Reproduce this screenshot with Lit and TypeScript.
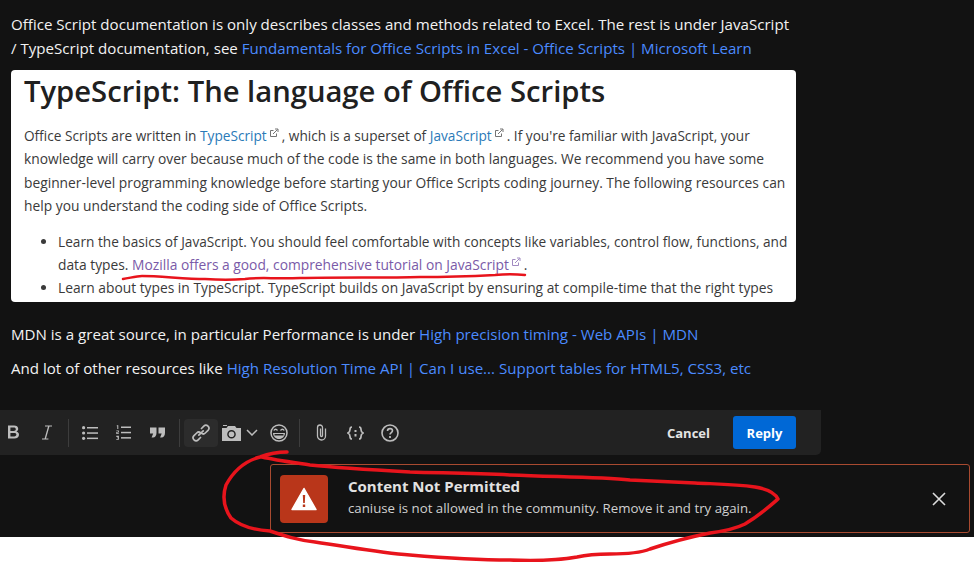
import { LitElement, html, css } from "lit";
import { customElement } from "lit/decorators.js";

const extIcon = html`<svg class="ext" viewBox="0 0 10 10" width="10" height="10" fill="none" stroke="currentColor" stroke-width="1">
  <path d="M7.5 5.500v3h-6v-6h3" />
  <path d="M4 6l4.500-4.500M6 1h3v3" />
</svg>`;

const circlePath =
  "M287 452 C277 452 268 454 260 457 C245 461 233 472 226 485 C222 497 224 508 231 518 C240 526 254 530 270 531 C285 536 297 540 315 542 C350 547 380 553 410 555 C445 558 480 560 510 560 C535 561 560 560 577 557 C590 554 600 554 610 554 C625 554 640 553 650 549 C665 544 690 537 710 533 C725 531 735 529 745 524 C760 515 770 506 778 499 C775 493 768 489 755 487 C735 484 715 484 695 483 C675 482 650 481 630 480 C600 477 560 477 510 475 C470 473 440 473 410 472 C375 470 340 468 310 465 C290 462 275 460 262 457";

const underlinePath =
  "M123 279 C130 278 136 276 142 276 C160 276 185 279 205 279 C220 280 232 280 245 279 C258 277 275 279 300 278 C340 277 385 278 420 277 C450 277 475 276 495 275 C505 274 515 274 525 275";

@customElement("app-root")
export class AppRoot extends LitElement {
  static styles = css`
    :host {
      display: block;
      position: relative;
      width: 974px;
      height: 562px;
      background: #fff;
      overflow: hidden;
      font-family: "Open Sans", "Noto Sans", sans-serif;
    }
    .page {
      display: flex;
      flex-direction: column;
      height: 537px;
      background: #121212;
    }
    .composer {
      width: 821px;
      flex: none;
    }
    .post {
      height: 410px;
      padding: 12px 0 0 11px;
      box-sizing: border-box;
      color: #f2f2f2;
      font-size: 15.1px;
      line-height: 24px;
    }
    .post p {
      margin: 0;
      white-space: nowrap;
    }
    .post a {
      color: #4b8bff;
    }
    .shot {
      width: 785px;
      height: 232px;
      margin: 10px 0 20px;
      padding: 5px 0 0 13px;
      box-sizing: border-box;
      background: #fff;
      border-radius: 4px;
      overflow: hidden;
      color: #3a3a3a;
      font-size: 13.8px;
      line-height: 23.4px;
    }
    .shot h1 {
      margin: 0 0 17px;
      font-size: 29.2px;
      line-height: 32px;
      font-weight: 600;
      color: #202020;
      white-space: nowrap;
    }
    .shot .para {
      margin: 0 0 12px;
    }
    .shot a {
      color: #2a7ab8;
    }
    .shot a.seen {
      color: #7a5aa8;
    }
    .shot .tight {
      font-size: 13.66px;
    }
    .shot ul {
      margin: 0;
      padding: 0 0 0 34px;
      list-style: disc;
      white-space: nowrap;
    }
    .ext {
      margin: 0 3px 0 2px;
      vertical-align: 3px;
      opacity: 0.7;
    }
    .post p.next {
      margin-top: 10px;
    }
    .toolbar {
      display: flex;
      align-items: center;
      height: 45px;
      background: #222;
      border-radius: 0 0 5px 0;
      box-sizing: border-box;
    }
    .tools {
      display: flex;
      align-items: center;
      height: 100%;
    }
    .tool {
      display: flex;
      align-items: center;
      justify-content: center;
      flex: none;
      height: 28px;
      border-radius: 4px;
    }
    .tool.active {
      background: #2c2c2c;
      margin-left: 4px;
    }
    .tool svg {
      display: block;
    }
    .sep {
      flex: none;
      width: 1px;
      height: 28px;
      background: #3d3d3d;
    }
    .sep.tail {
      margin-left: 1px;
    }
    .actions {
      margin-left: auto;
      display: flex;
      align-items: center;
      gap: 22px;
      padding-right: 25px;
    }
    .cancel {
      font-size: 13px;
      font-weight: 700;
      color: #e4e4e4;
      margin-left: -1px;
      margin-right: 1px;
    }
    .reply {
      width: 63px;
      height: 33px;
      display: flex;
      align-items: center;
      justify-content: center;
      background: #0068d6;
      color: #fff;
      font-size: 13px;
      font-weight: 700;
      border-radius: 3px;
    }
    .toast-row {
      display: flex;
      justify-content: flex-end;
      padding: 9px 4px 0 0;
    }
    .toast {
      width: 700px;
      height: 69px;
      box-sizing: border-box;
      display: flex;
      align-items: center;
      padding: 0 23px 0 9px;
      border: 1px solid #a84a30;
      border-radius: 3px;
      background: #121212;
    }
    .badge {
      flex: none;
      width: 48px;
      height: 48px;
      display: flex;
      align-items: center;
      justify-content: center;
      background: #b9361a;
      border-radius: 4px;
    }
    .msg {
      flex: 1;
      margin-left: 20px;
      padding-bottom: 2px;
      white-space: nowrap;
    }
    .msg b {
      display: block;
      font-size: 15px;
      line-height: 21px;
      font-weight: 700;
      color: #e2e2e2;
    }
    .msg span {
      display: block;
      font-size: 13.25px;
      line-height: 22px;
      color: #d0d0d0;
    }
    .close {
      display: block;
      flex: none;
    }
    .ink {
      position: absolute;
      left: 0;
      top: 0;
      pointer-events: none;
    }
    .ink path {
      fill: none;
      stroke: #e8141c;
      stroke-linecap: round;
      stroke-linejoin: round;
    }
  `;

  render() {
    return html`
      <div class="page">
        <div class="composer">
          <div class="post">
            <p>Office Script documentation is only describes classes and methods related to Excel. The rest is under JavaScript</p>
            <p>/ TypeScript documentation, see <a>Fundamentals for Office Scripts in Excel - Office Scripts | Microsoft Learn</a></p>
            <div class="shot">
              <h1>TypeScript: The language of Office Scripts</h1>
              <div class="para">
                <p class="tight">Office Scripts are written in <a>TypeScript</a>${extIcon}, which is a superset of <a>JavaScript</a>${extIcon}. If you're familiar with JavaScript, your</p>
                <p>knowledge will carry over because much of the code is the same in both languages. We recommend you have some</p>
                <p>beginner-level programming knowledge before starting your Office Scripts coding journey. The following resources can</p>
                <p>help you understand the coding side of Office Scripts.</p>
              </div>
              <ul>
                <li><span class="tight">Learn the basics of JavaScript. You should feel comfortable with concepts like variables, control flow, functions, and</span><br />data types. <a class="seen">Mozilla offers a good, comprehensive tutorial on JavaScript${extIcon}</a>.</li>
                <li>Learn about types in TypeScript. TypeScript builds on JavaScript by ensuring at compile-time that the right types</li>
              </ul>
            </div>
            <p>MDN is a great source, in particular Performance is under <a>High precision timing - Web APIs | MDN</a></p>
            <p class="next">And lot of other resources like <a>High Resolution Time API | Can I use... Support tables for HTML5, CSS3, etc</a></p>
          </div>
          <div class="toolbar">
            <div class="tools">${this.renderTools()}</div>
            <div class="actions">
              <span class="cancel">Cancel</span>
              <span class="reply">Reply</span>
            </div>
          </div>
        </div>
        <div class="toast-row">
          <div class="toast">
            <div class="badge">
              <svg width="26" height="24" viewBox="0 0 26 24">
                <path d="M13 1.500 25 22.500H1Z" fill="#fff" stroke="#fff" stroke-width="1.500" stroke-linejoin="round" />
                <path d="M11.800 8h2.400l-.4 8h-1.600zM11.800 17.600h2.400v2.400h-2.400z" fill="#b9361a" />
              </svg>
            </div>
            <div class="msg">
              <b>Content Not Permitted</b>
              <span>caniuse is not allowed in the community. Remove it and try again.</span>
            </div>
            <svg class="close" width="14" height="14" viewBox="0 0 14 14" stroke="#dcdcdc" stroke-width="1.600" fill="none">
              <path d="M1 1l12 12M13 1 1 13" />
            </svg>
          </div>
        </div>
      </div>
      <svg class="ink" width="974" height="562" viewBox="0 0 974 562">
        <path d=${underlinePath} stroke-width="2.500" />
        <path d=${circlePath} stroke-width="3.500" />
      </svg>
    `;
  }

  renderTools() {
    const tool = (w: number, glyph: unknown, cls = "") =>
      html`<div class="tool ${cls}" style="width:${w}px">${glyph}</div>`;
    return html`
      ${tool(26, html`<svg width="13" height="15" viewBox="0 0 13 15" fill="#bdbdbd"><path fill-rule="evenodd" d="M1 .5h6c2.600 0 4.200 1.200 4.200 3.300 0 1.300-.7 2.300-1.800 2.800 1.600.4 2.600 1.600 2.600 3.200 0 2.400-1.800 3.700-4.600 3.700H1ZM3.400 2.600v3.300h3.300c1.300 0 2.100-.6 2.100-1.700s-.8-1.600-2.100-1.600Zm0 5.300v3.500h3.800c1.400 0 2.200-.6 2.200-1.800s-.8-1.700-2.200-1.700Z" /></svg>`)}
      ${tool(42, html`<svg width="10" height="15" viewBox="0 0 10 15" fill="#bdbdbd"><path d="M3 .5h7v1.100H7.400L4 13.400h2.400v1.100H0v-1.100h2.600L6 1.600H3Z" /></svg>`)}
      <div class="sep"></div>
      ${tool(42, html`<svg width="16" height="14" viewBox="0 0 16 14" fill="#bdbdbd"><circle cx="1.600" cy="1.700" r="1.600" /><circle cx="1.600" cy="7" r="1.600" /><circle cx="1.600" cy="12.300" r="1.600" /><rect x="5" y="1" width="11" height="1.500" /><rect x="5" y="6.300" width="11" height="1.500" /><rect x="5" y="11.600" width="11" height="1.500" /></svg>`)}
      ${tool(25, html`<svg width="15" height="15" viewBox="0 0 15 15" fill="#bdbdbd"><rect x="5" y="1.500" width="10" height="1.500" /><rect x="5" y="6.800" width="10" height="1.500" /><rect x="5" y="12.100" width="10" height="1.500" /><path d="M.8.300h1.500v3.700H1.300V1.200H.8ZM.3 5.500h2.600v2.100H1.200v.6h1.700V9H.3V7h1.700v-.7H.3ZM.3 10.700h2.600v4H.3V14h1.700v-.7H1v-.7h1v-.7H.3Z" /></svg>`)}
      ${tool(43, html`<svg width="15" height="11" viewBox="0 0 15 11" fill="#bdbdbd"><path d="M0 .5h6.500v5.200C6.500 8.500 5 10.500 3 10.500H1.600L3.200 6.500H0ZM8.500.5H15v5.200c0 2.800-1.500 4.800-3.500 4.800h-1.400l1.600-4H8.500Z" /></svg>`)}
      <div class="sep"></div>
      ${tool(34, html`<svg width="20" height="20" viewBox="0 0 20 20" fill="none" stroke="#bdbdbd" stroke-width="1.700" stroke-linecap="round"><path d="M7.800 12.200 12.200 7.800" /><path d="M10.500 5.500 12.800 3.200a3 3 0 0 1 4.200 0 3 3 0 0 1 0 4.200L14.300 10a3 3 0 0 1-4 .2" /><path d="M9.500 14.500 7.200 16.800a3 3 0 0 1-4.200 0 3 3 0 0 1 0-4.200L5.700 10a3 3 0 0 1 4-.2" /></svg>`, "active")}
      ${tool(27, html`<svg width="19" height="16" viewBox="0 0 19 16"><path fill="#bdbdbd" fill-rule="evenodd" d="M1 0h4v1H1ZM0 3h4.500L6 1h7l1.500 2H19v13H0Zm9.500 2a4.300 4.300 0 1 0 0 8.600 4.300 4.300 0 0 0 0-8.600Z" /><circle cx="9.500" cy="9.300" r="2.800" fill="#bdbdbd" /></svg>`)}
      ${tool(14, html`<svg width="12" height="7" viewBox="0 0 12 7" fill="none" stroke="#bdbdbd" stroke-width="1.500"><path d="M1 1l5 5 5-5" /></svg>`)}
      ${tool(39, html`<svg width="18" height="18" viewBox="0 0 18 18"><circle cx="9" cy="9" r="8" fill="none" stroke="#bdbdbd" stroke-width="1.500" /><path d="M3 9h12c0 3.300-2.700 6-6 6s-6-2.700-6-6Z" fill="#bdbdbd" /><rect x="4.500" y="10" width="9" height="1.500" fill="#222" /><path d="M3.800 6.500c1-1.600 2.700-1.600 3.700 0M10.500 6.500c1-1.600 2.700-1.600 3.700 0" fill="none" stroke="#bdbdbd" stroke-width="1.400" /></svg>`)}
      <div class="sep tail"></div>
      ${tool(42, html`<svg width="11" height="17" viewBox="0 0 11 17" fill="none" stroke="#bdbdbd" stroke-width="1.300"><path d="M9.500 4.500v7.500a4 4 0 0 1-8 0V3.500a2.500 2.500 0 0 1 5 0V11.500a1 1 0 0 1-2 0V4.500" /></svg>`)}
      ${tool(26, html`<svg width="17" height="14" viewBox="0 0 17 14" fill="none" stroke="#bdbdbd" stroke-width="1.700"><path d="M5 1C3 1 3 2 3 3.500S3 6 1 7c2 1 2 2 2 3.500S3 13 5 13M12 1c2 0 2 1 2 2.500S14 6 16 7c-2 1-2 2-2 3.500S14 13 12 13" /><path d="M8.500 4v2M8.500 8v2.500" stroke-width="2" /></svg>`)}
      ${tool(43, html`<svg width="18" height="18" viewBox="0 0 18 18" fill="none" stroke="#bdbdbd" stroke-width="1.600"><circle cx="9" cy="9" r="8" /><path d="M6.500 7c0-1.500 1.100-2.400 2.500-2.400s2.500.9 2.500 2.200c0 1.900-2.500 1.800-2.500 3.800" /><path d="M9 12v2" stroke-width="1.800" /></svg>`)}
    `;
  }
}
